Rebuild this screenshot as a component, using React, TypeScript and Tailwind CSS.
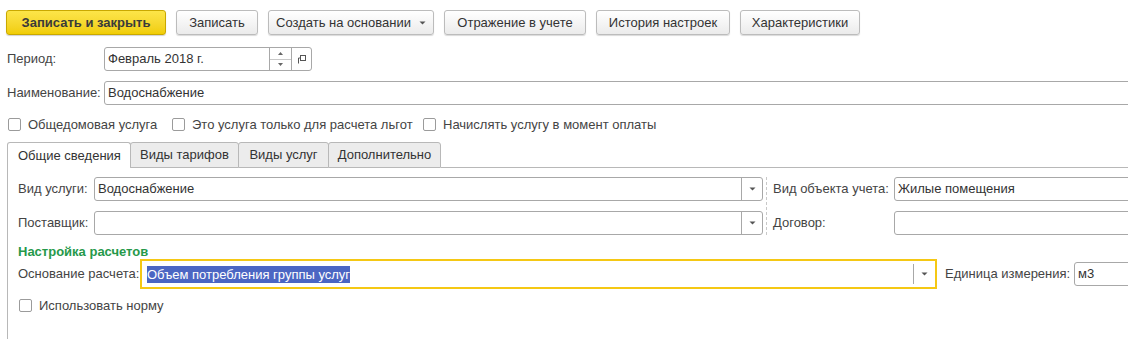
import React from "react";

/* ── small drawings ─────────────────────────────────────────────── */
function DropArrow() {
  return (
    <svg width="7" height="4" viewBox="0 0 7 4" className="block">
      <path d="M0.5 0.5 H6.5 L3.5 3.5 Z" fill="#555" />
    </svg>
  );
}

function Btn({ w, children, primary = false }: { w: string; children: React.ReactNode; primary?: boolean }) {
  return (
    <div
      className={
        primary
          ? `${w} shrink-0 h-[25px] flex items-center justify-center rounded-[3px] border border-[#c9a800] bg-linear-to-b from-[#fce548] to-[#f1cd00] text-[13px] font-bold text-[#3a3a3a] shadow-[0_1px_1px_rgba(0,0,0,0.18)]`
          : `${w} shrink-0 h-[25px] flex items-center justify-center rounded-[3px] border border-[#bcbcbc] bg-linear-to-b from-white to-[#ebebeb] text-[13px] text-[#333] shadow-[0_1px_1px_rgba(0,0,0,0.15)]`
      }
    >
      {children}
    </div>
  );
}

function Check({ label }: { label: string }) {
  return (
    <div className="flex items-center gap-[7px]">
      <span className="shrink-0 w-[13px] h-[13px] rounded-[2px] border border-[#9b9b9b] bg-white" />
      <span className="text-[#444]">{label}</span>
    </div>
  );
}

function Field({ w, value = "", drop = false }: { w: string; value?: string; drop?: boolean }) {
  return (
    <div className={`${w} shrink-0 h-[24px] flex rounded-[3px] border border-[#a8a8a8] bg-white`}>
      <div className="flex-1 flex items-center pl-[3px] text-[#333] overflow-hidden">{value}</div>
      {drop && (
        <div className="w-[21px] flex items-center justify-center border-l border-[#a8a8a8]">
          <DropArrow />
        </div>
      )}
    </div>
  );
}

export default function App() {
  return (
    <div className="w-[1128px] h-[339px] overflow-hidden whitespace-nowrap bg-white font-['Liberation_Sans',Arial,sans-serif] text-[13px] text-[#444]">
      {/* ── command bar ─────────────────────────────────────────── */}
      <div className="flex gap-[10px] pl-[6px] pt-[10px]">
        <Btn w="w-[160px]" primary>Записать и закрыть</Btn>
        <Btn w="w-[82px]">Записать</Btn>
        <Btn w="w-[166px]">
          <span>Создать на основании</span>
          <span className="ml-[8px]"><DropArrow /></span>
        </Btn>
        <Btn w="w-[142px]">Отражение в учете</Btn>
        <Btn w="w-[134px]">История настроек</Btn>
        <Btn w="w-[120px]">Характеристики</Btn>
      </div>

      {/* ── period ─────────────────────────────────────────────── */}
      <div className="flex items-center pl-[7px] mt-[12px]">
        <span className="w-[97px] shrink-0">Период:</span>
        <div className="w-[208px] shrink-0 h-[24px] flex rounded-[3px] border border-[#a8a8a8] bg-white">
          <div className="flex-1 flex items-center pl-[3px] text-[#333]">Февраль 2018 г.</div>
          <div className="w-[22px] flex flex-col border-l border-[#a8a8a8]">
            <div className="flex-1 flex items-center justify-center border-b border-[#c8c8c8]">
              <svg width="5" height="3" viewBox="0 0 5 3"><path d="M0 3 H5 L2.5 0 Z" fill="#666" /></svg>
            </div>
            <div className="flex-1 flex items-center justify-center">
              <svg width="5" height="3" viewBox="0 0 5 3"><path d="M0 0 H5 L2.5 3 Z" fill="#666" /></svg>
            </div>
          </div>
          <div className="w-[20px] flex items-center justify-center border-l border-[#a8a8a8]">
            <svg width="11" height="11" viewBox="0 0 11 11" fill="none" stroke="#555" strokeWidth="1">
              <rect x="4.5" y="1.5" width="5" height="5" />
              <path d="M4.5 4 H2.5 V9.5" />
            </svg>
          </div>
        </div>
      </div>

      {/* ── name ───────────────────────────────────────────────── */}
      <div className="flex items-center pl-[7px] mt-[10px]">
        <span className="w-[97px] shrink-0">Наименование:</span>
        <Field w="w-[1040px]" value="Водоснабжение" />
      </div>

      {/* ── flags ──────────────────────────────────────────────── */}
      <div className="flex items-center pl-[8px] mt-[13px] h-[13px]">
        <div className="w-[164px] shrink-0"><Check label="Общедомовая услуга" /></div>
        <div className="w-[251px] shrink-0"><Check label="Это услуга только для расчета льгот" /></div>
        <Check label="Начислять услугу в момент оплаты" />
      </div>

      {/* ── tabs ───────────────────────────────────────────────── */}
      <div className="ml-[7px] mt-[11px]">
        <div className="flex h-[26px]">
          <div className="w-[124px] shrink-0 flex items-center pl-[10px] rounded-t-[3px] border border-b-0 border-[#b8b8b8] bg-white text-[#333]">
            Общие сведения
          </div>
          <div className="w-[109px] shrink-0 -ml-px flex items-center justify-center rounded-t-[3px] border border-[#b8b8b8] bg-[#ececec] text-[#333]">
            Виды тарифов
          </div>
          <div className="w-[91px] shrink-0 -ml-px flex items-center justify-center rounded-t-[3px] border border-[#b8b8b8] bg-[#ececec] text-[#333]">
            Виды услуг
          </div>
          <div className="w-[113px] shrink-0 -ml-px flex items-center justify-center rounded-t-[3px] border border-[#b8b8b8] bg-[#ececec] text-[#333]">
            Дополнительно
          </div>
          <div className="flex-1 border-b border-[#b8b8b8]" />
        </div>

        {/* ── tab page ─────────────────────────────────────────── */}
        <div className="h-[200px] border-l border-[#b8b8b8] pl-[10px] pt-[9px]">
          <div className="relative">
            {/* dashed column separator */}
            <div className="absolute left-[748px] top-0 h-[58px] border-l border-dashed border-[#c8c8c8]" />
            <div className="flex items-center">
              <span className="w-[76px] shrink-0">Вид услуги:</span>
              <Field w="w-[669px]" value="Водоснабжение" drop />
              <span className="w-[131px] shrink-0 pl-[10px]">Вид объекта учета:</span>
              <Field w="w-[260px]" value="Жилые помещения" />
            </div>
            <div className="flex items-center mt-[10px]">
              <span className="w-[76px] shrink-0">Поставщик:</span>
              <Field w="w-[669px]" drop />
              <span className="w-[131px] shrink-0 pl-[10px]">Договор:</span>
              <Field w="w-[260px]" />
            </div>
          </div>

          <div className="mt-[9px] h-[16px] leading-[16px] font-bold text-[#26994a]">Настройка расчетов</div>

          <div className="flex items-center mt-[-1px]">
            <span className="w-[122px] shrink-0">Основание расчета:</span>
            <div className="w-[797px] shrink-0 h-[30px] flex border-2 border-[#f5c814] bg-white">
              <div className="flex-1 flex items-center pl-[5px]">
                <span className="bg-[#4b66c3] text-white leading-[17px]">Объем потребления группы услуг</span>
              </div>
              <div className="w-[22px] flex items-center border-l border-[#a8a8a8] my-[3px] pl-[7px]">
                <DropArrow />
              </div>
            </div>
            <span className="w-[137px] shrink-0 pl-[8px]">Единица измерения:</span>
            <Field w="w-[120px]" value="м3" />
          </div>

          <div className="mt-[7px] pl-[1px]">
            <Check label="Использовать норму" />
          </div>
        </div>
      </div>
    </div>
  );
}
